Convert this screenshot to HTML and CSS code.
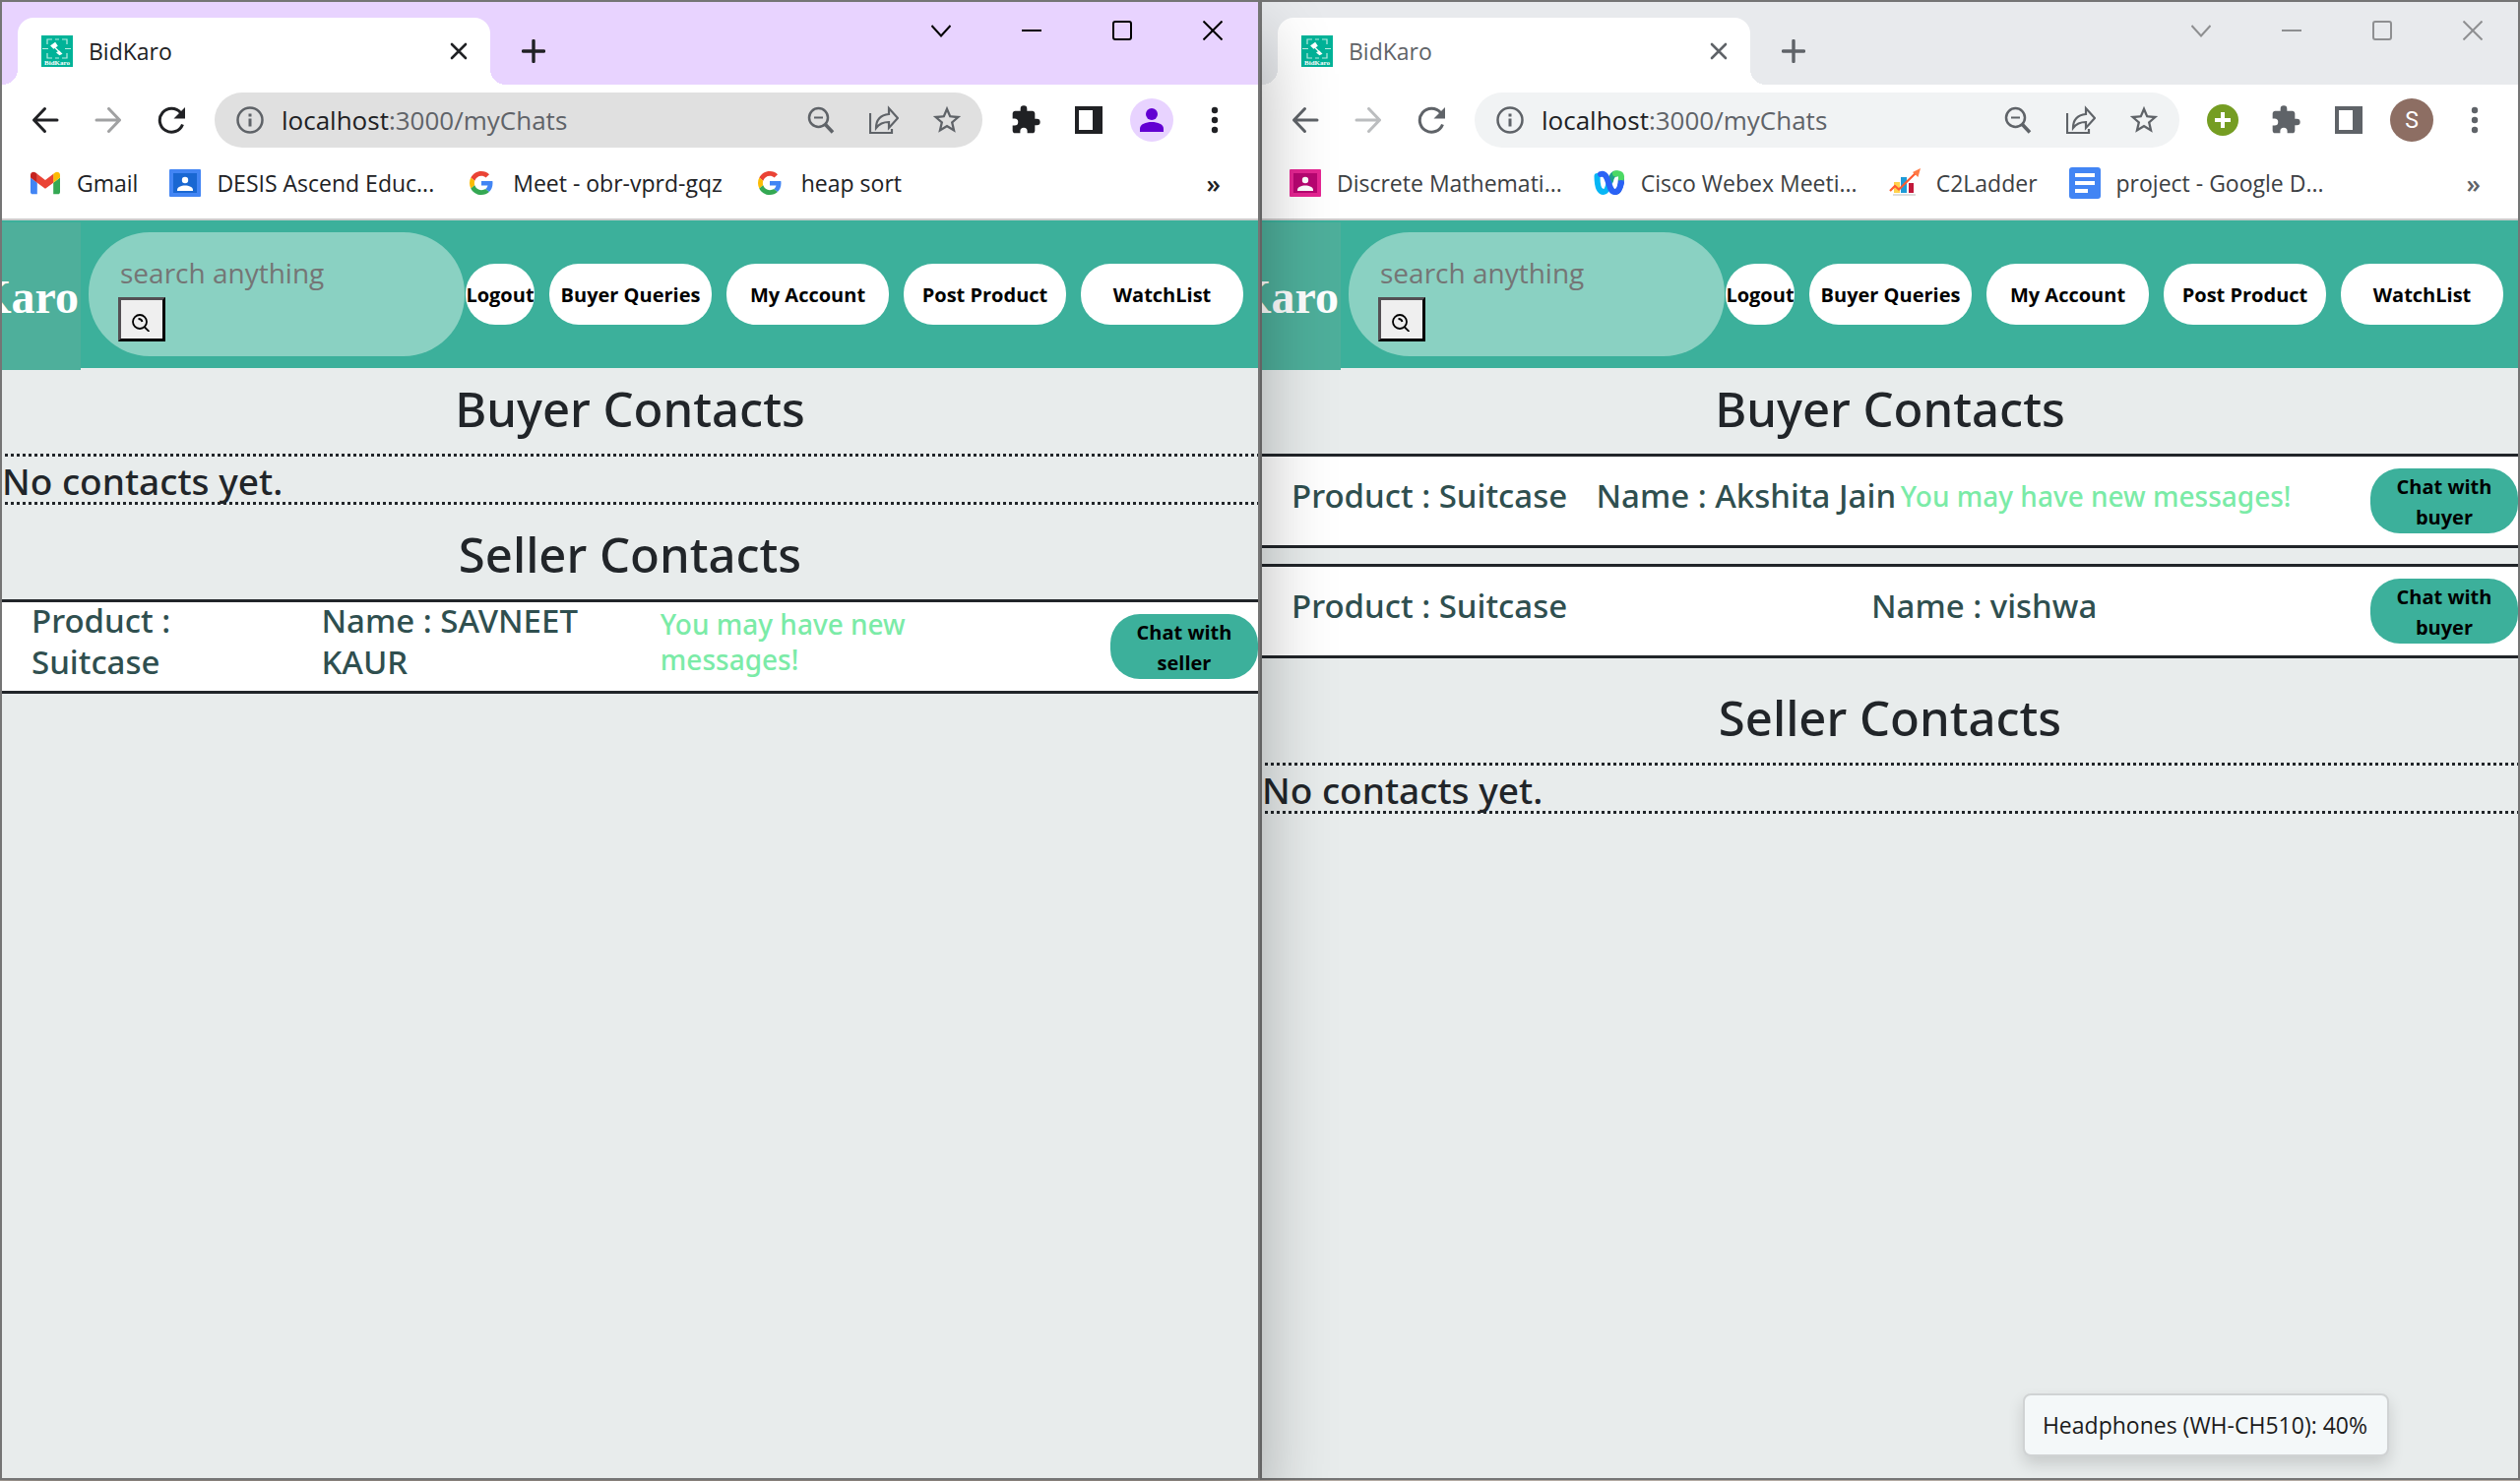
FILE: index.html
```html
<!DOCTYPE html>
<html lang="en">
<head>
<meta charset="utf-8">
<title>BidKaro</title>
<link rel="stylesheet" href="styles.css">
</head>
<body>
<svg class="defs" aria-hidden="true">
  <symbol id="favicon" viewBox="0 0 32 32">
    <rect width="32" height="32" fill="#00b398"/>
    <path d="M6 9V4h5M21 4h5v5M6 18v5h5M21 23h5v-5M1 13.500h6M24 13.500h6M14 4h4M14 23h4" fill="none" stroke="#b9ece2" stroke-width="1.200"/>
    <path d="M10 10.500l4-3 2 3-3.500 2.500zM13.500 12l5 5M16 17.500l2-1.500 2.500 2.500-2 1z" fill="#fff" stroke="#fff" stroke-width="1.200"/>
    <text x="16" y="30" text-anchor="middle" font-family="Liberation Serif, serif" font-weight="700" font-size="7" fill="#fff">BidKaro</text>
  </symbol>
  <symbol id="close-tab" viewBox="0 0 20 20"><path d="M3 3l14 14M17 3L3 17" fill="none" stroke="currentColor" stroke-width="2.600" stroke-linecap="round"/></symbol>
  <symbol id="plus" viewBox="0 0 24 24"><path d="M12 1.500v21M1.500 12h21" fill="none" stroke="currentColor" stroke-width="3.400" stroke-linecap="round"/></symbol>
  <symbol id="plus-bold" viewBox="0 0 18 18"><path d="M9 1v16M1 9h16" fill="none" stroke="currentColor" stroke-width="4"/></symbol>
  <symbol id="chevron" viewBox="0 0 20 20"><path d="M0.500 5L10 15.500 19.500 5" fill="none" stroke="currentColor" stroke-width="2"/></symbol>
  <symbol id="minimize" viewBox="0 0 20 20"><path d="M0 10h20" stroke="currentColor" stroke-width="2"/></symbol>
  <symbol id="maximize" viewBox="0 0 20 20"><rect x="1" y="1" width="18" height="18" rx="2" fill="none" stroke="currentColor" stroke-width="2"/></symbol>
  <symbol id="close" viewBox="0 0 20 20"><path d="M0.500 0.500l19 19M19.500 0.500l-19 19" stroke="currentColor" stroke-width="2"/></symbol>
  <symbol id="back" viewBox="0 0 28 28"><path d="M26 14H2.500M13.500 2.500L2.500 14l11 11.500" fill="none" stroke="currentColor" stroke-width="3" stroke-linecap="round" stroke-linejoin="round"/></symbol>
  <symbol id="forward" viewBox="0 0 28 28"><path d="M2 14h23.500M14.500 2.500l11 11.500-11 11.500" fill="none" stroke="currentColor" stroke-width="3" stroke-linecap="round" stroke-linejoin="round"/></symbol>
  <symbol id="reload" viewBox="0 0 28 28"><path d="M25.500 18.500A12 12 0 1 1 23.500 6.500" fill="none" stroke="currentColor" stroke-width="3"/><path d="M28 1v11.500H16.500z" fill="currentColor"/></symbol>
  <symbol id="info" viewBox="0 0 28 28"><circle cx="14" cy="14" r="12.500" fill="none" stroke="currentColor" stroke-width="2.500"/><path d="M14 12.500v8M14 7.500v3" stroke="currentColor" stroke-width="3"/></symbol>
  <symbol id="zoom-out" viewBox="0 0 28 28"><circle cx="11.500" cy="11.500" r="9.500" fill="none" stroke="currentColor" stroke-width="2.500"/><path d="M7 11.500h9" stroke="currentColor" stroke-width="2"/><path d="M18.500 18.500l7.500 8" stroke="currentColor" stroke-width="3.500"/></symbol>
  <symbol id="share" viewBox="0 0 30 30"><path d="M1 8v20h22v-4" fill="none" stroke="currentColor" stroke-width="2.200"/><path d="M20 3v6C11 10 7 15 7 23c3-4 7-6 13-6v6l9-10z" fill="none" stroke="currentColor" stroke-width="2.200" stroke-linejoin="miter"/></symbol>
  <symbol id="star" viewBox="0 0 24 24"><path fill="currentColor" d="M22 9.240l-7.190-.62L12 2 9.190 8.630 2 9.240l5.460 4.730L5.820 21 12 17.270 18.180 21l-1.630-7.030L22 9.240zM12 15.400l-3.760 2.270 1-4.280-3.320-2.880 4.380-.38L12 6.100l1.710 4.040 4.380.38-3.320 2.880 1 4.280L12 15.400z"/></symbol>
  <symbol id="puzzle" viewBox="0 0 24 24"><path fill="currentColor" d="M20.500 11H19V7c0-1.100-.9-2-2-2h-4V3.500a2.500 2.500 0 0 0-5 0V5H4c-1.100 0-2 .9-2 2v3.800h1.500a2.700 2.700 0 0 1 0 5.400H2V20c0 1.100.9 2 2 2h3.800v-1.500a2.700 2.700 0 0 1 5.400 0V22H17c1.100 0 2-.9 2-2v-4h1.500a2.500 2.500 0 0 0 0-5z"/></symbol>
  <symbol id="panel" viewBox="0 0 28 28"><path fill="currentColor" fill-rule="evenodd" d="M0 0h28v28H0zM4 4v20h14V4z"/></symbol>
  <symbol id="dots" viewBox="0 0 8 28"><circle cx="4" cy="4" r="3.200" fill="currentColor"/><circle cx="4" cy="14" r="3.200" fill="currentColor"/><circle cx="4" cy="24" r="3.200" fill="currentColor"/></symbol>
  <symbol id="person" viewBox="0 0 24 24"><ellipse cx="12" cy="6" rx="6" ry="6" fill="currentColor"/><path d="M0 24v-3c0-5 6-7 12-7s12 2 12 7v3z" fill="currentColor"/></symbol>
  <symbol id="gmail" viewBox="52 42 88 66">
    <path fill="#4285f4" d="M58 108h14V74L52 59v43c0 3.320 2.690 6 6 6"/>
    <path fill="#34a853" d="M120 108h14c3.320 0 6-2.690 6-6V59l-20 15"/>
    <path fill="#fbbc04" d="M120 48v26l20-15v-8c0-7.420-8.470-11.650-14.400-7.200"/>
    <path fill="#ea4335" d="M72 74V48l24 18 24-18v26L96 92"/>
    <path fill="#c5221f" d="M52 51v8l20 15V48l-5.600-4.200c-5.940-4.450-14.400-.22-14.400 7.200"/>
  </symbol>
  <symbol id="google" viewBox="0 0 48 48">
    <path fill="#ea4335" d="M24 9.500c3.540 0 6.710 1.220 9.210 3.600l6.850-6.850C35.900 2.380 30.470 0 24 0 14.620 0 6.510 5.380 2.560 13.220l7.980 6.190C12.430 13.720 17.740 9.500 24 9.500z"/>
    <path fill="#4285f4" d="M46.980 24.550c0-1.570-.15-3.090-.38-4.550H24v9.020h12.940c-.58 2.960-2.260 5.480-4.780 7.180l7.730 6c4.510-4.180 7.090-10.360 7.090-17.650z"/>
    <path fill="#fbbc05" d="M10.530 28.590A14.500 14.500 0 0 1 9.770 24c0-1.600.27-3.140.76-4.590l-7.980-6.190A23.900 23.900 0 0 0 0 24c0 3.880.92 7.540 2.560 10.780l7.970-6.190z"/>
    <path fill="#34a853" d="M24 48c6.480 0 11.930-2.130 15.890-5.810l-7.730-6c-2.150 1.450-4.920 2.300-8.160 2.300-6.260 0-11.570-4.220-13.470-9.910l-7.980 6.190C6.510 42.620 14.620 48 24 48z"/>
  </symbol>
  <symbol id="classroom-blue" viewBox="0 0 32 28"><rect width="32" height="28" rx="1" fill="#4285f4"/><rect x="4" y="4" width="24" height="20" fill="#1967d2"/><circle cx="16" cy="11" r="3.200" fill="#fff"/><path d="M8 22v-1c0-3 4-4.500 8-4.500s8 1.500 8 4.500v1z" fill="#fff"/></symbol>
  <symbol id="classroom-pink" viewBox="0 0 32 28"><rect width="32" height="28" rx="1" fill="#e52592"/><rect x="4" y="4" width="24" height="20" fill="#b80672"/><circle cx="16" cy="11" r="3.200" fill="#fff"/><path d="M8 22v-1c0-3 4-4.500 8-4.500s8 1.500 8 4.500v1z" fill="#fff"/></symbol>
  <symbol id="webex" viewBox="0 0 32 26" fill="none" stroke-width="6" stroke-linecap="round">
    <path d="M28 8c-.5 8-2 14-6 14" stroke="#1e56d8"/>
    <path d="M17 11c1-5 3-7.500 6-7.500" stroke="#1fa08a"/>
    <path d="M22 3.500c4.500-1.200 6.500 1 6 5" stroke="#4cd964"/>
    <path d="M3.500 6c0 9 1.500 16 6.500 16 3 0 4.500-4 5.500-9" stroke="#07b6f5"/>
    <path d="M7 4c9-3 7 18 14.500 18 4 0 5.500-4 6.500-9" stroke="#2a62f5"/>
  </symbol>
  <symbol id="ladder" viewBox="0 0 32 32"><rect x="5" y="15" width="6" height="11" fill="#ffd24d"/><rect x="12" y="10" width="6" height="16" fill="#1e9bd7"/><rect x="20" y="16" width="5" height="10" fill="#c2183a"/><path d="M4 28h23" stroke="#ddd" stroke-width="2"/><path d="M1 24l5-5 4 3.500L28 5" fill="none" stroke="#ff5a30" stroke-width="2.200"/><path d="M32 1l-8 4 5.500 5z" fill="#ff7a45"/></symbol>
  <symbol id="docs" viewBox="0 0 32 32"><rect width="32" height="32" rx="3" fill="#4285f4"/><path d="M6 8h20M6 16h20M6 24h13" stroke="#fff" stroke-width="4"/></symbol>
  <symbol id="search" viewBox="0 0 18 18"><circle cx="8" cy="8" r="7" fill="none" stroke="currentColor" stroke-width="1.800"/><path d="M6.500 5c2.500 0 3.500.7 4 3M12.500 13l5 5" fill="none" stroke="currentColor" stroke-width="1.800"/></symbol>
</svg>

<div class="desktop">
  <section class="window window--active">
    <div class="tabs">
      <div class="tab">
        <svg class="i32"><use href="#favicon"/></svg>
        <span class="tab-title">BidKaro</span>
        <button class="icon-btn tab-close" aria-label="Close tab"><svg class="i20"><use href="#close-tab"/></svg></button>
      </div>
      <button class="icon-btn new-tab" aria-label="New tab"><svg class="i24"><use href="#plus"/></svg></button>
      <div class="controls">
        <button class="icon-btn" aria-label="Search tabs"><svg class="i20"><use href="#chevron"/></svg></button>
        <button class="icon-btn" aria-label="Minimize"><svg class="i20"><use href="#minimize"/></svg></button>
        <button class="icon-btn" aria-label="Maximize"><svg class="i20"><use href="#maximize"/></svg></button>
        <button class="icon-btn" aria-label="Close"><svg class="i20"><use href="#close"/></svg></button>
      </div>
    </div>
    <div class="toolbar">
      <div class="tools">
        <button class="icon-btn" aria-label="Back"><svg class="i28"><use href="#back"/></svg></button>
        <button class="icon-btn is-off" aria-label="Forward"><svg class="i28"><use href="#forward"/></svg></button>
        <button class="icon-btn" aria-label="Reload"><svg class="i28"><use href="#reload"/></svg></button>
      </div>
      <div class="omnibox">
        <svg class="i28"><use href="#info"/></svg>
        <a class="url" href="#"><span class="host">localhost</span>:3000/myChats</a>
        <div class="tools">
          <button class="icon-btn" aria-label="Zoom"><svg class="i28"><use href="#zoom-out"/></svg></button>
          <button class="icon-btn" aria-label="Share"><svg class="i30"><use href="#share"/></svg></button>
          <button class="icon-btn" aria-label="Bookmark"><svg class="i34"><use href="#star"/></svg></button>
        </div>
      </div>
      <div class="tools">
        <button class="icon-btn" aria-label="Extensions"><svg class="i32"><use href="#puzzle"/></svg></button>
        <button class="icon-btn" aria-label="Side panel"><svg class="i28"><use href="#panel"/></svg></button>
        <button class="icon-btn" aria-label="Profile"><span class="avatar"><svg class="i24"><use href="#person"/></svg></span></button>
        <button class="icon-btn" aria-label="Menu"><svg class="dots"><use href="#dots"/></svg></button>
      </div>
    </div>
    <div class="bookmarks">
      <a href="#"><svg class="i32 pad-1"><use href="#gmail"/></svg>Gmail</a>
      <a href="#"><svg class="i32"><use href="#classroom-blue"/></svg>DESIS Ascend Educ...</a>
      <a href="#"><svg class="i32 pad-4"><use href="#google"/></svg>Meet - obr-vprd-gqz</a>
      <a href="#"><svg class="i32 pad-4"><use href="#google"/></svg>heap sort</a>
      <button class="more" aria-label="More bookmarks">»</button>
    </div>
    <div class="page">
      <nav class="navbar">
        <a class="brand" href="#"><span>BidKaro</span></a>
        <form class="search">
          <input type="text" placeholder="search anything" aria-label="search anything">
          <button type="button" aria-label="Search"><svg class="i18"><use href="#search"/></svg></button>
        </form>
        <div class="nav-buttons">
          <button class="pill pill--small">Logout</button>
          <button class="pill">Buyer Queries</button>
          <button class="pill">My Account</button>
          <button class="pill">Post Product</button>
          <button class="pill">WatchList</button>
        </div>
      </nav>
      <h1>Buyer Contacts</h1>
      <p class="empty">No contacts yet.</p>
      <h1>Seller Contacts</h1>
      <div class="contacts">
        <div class="contact contact--narrow">
          <h4><span>Product : Suitcase</span></h4>
          <h4><span>Name : SAVNEET KAUR</span></h4>
          <h5><span>You may have new messages!</span></h5>
          <button class="chat">Chat with seller</button>
        </div>
      </div>
    </div>
  </section>

  <section class="window window--idle">
    <div class="tabs">
      <div class="tab">
        <svg class="i32"><use href="#favicon"/></svg>
        <span class="tab-title">BidKaro</span>
        <button class="icon-btn tab-close" aria-label="Close tab"><svg class="i20"><use href="#close-tab"/></svg></button>
      </div>
      <button class="icon-btn new-tab" aria-label="New tab"><svg class="i24"><use href="#plus"/></svg></button>
      <div class="controls">
        <button class="icon-btn" aria-label="Search tabs"><svg class="i20"><use href="#chevron"/></svg></button>
        <button class="icon-btn" aria-label="Minimize"><svg class="i20"><use href="#minimize"/></svg></button>
        <button class="icon-btn" aria-label="Maximize"><svg class="i20"><use href="#maximize"/></svg></button>
        <button class="icon-btn" aria-label="Close"><svg class="i20"><use href="#close"/></svg></button>
      </div>
    </div>
    <div class="toolbar">
      <div class="tools">
        <button class="icon-btn" aria-label="Back"><svg class="i28"><use href="#back"/></svg></button>
        <button class="icon-btn is-off" aria-label="Forward"><svg class="i28"><use href="#forward"/></svg></button>
        <button class="icon-btn" aria-label="Reload"><svg class="i28"><use href="#reload"/></svg></button>
      </div>
      <div class="omnibox">
        <svg class="i28"><use href="#info"/></svg>
        <a class="url" href="#"><span class="host">localhost</span>:3000/myChats</a>
        <div class="tools">
          <button class="icon-btn" aria-label="Zoom"><svg class="i28"><use href="#zoom-out"/></svg></button>
          <button class="icon-btn" aria-label="Share"><svg class="i30"><use href="#share"/></svg></button>
          <button class="icon-btn" aria-label="Bookmark"><svg class="i34"><use href="#star"/></svg></button>
        </div>
      </div>
      <div class="tools">
        <button class="icon-btn" aria-label="Add-on"><span class="addon"><svg class="i18"><use href="#plus-bold"/></svg></span></button>
        <button class="icon-btn" aria-label="Extensions"><svg class="i32"><use href="#puzzle"/></svg></button>
        <button class="icon-btn" aria-label="Side panel"><svg class="i28"><use href="#panel"/></svg></button>
        <button class="icon-btn" aria-label="Profile"><span class="avatar avatar--letter">S</span></button>
        <button class="icon-btn" aria-label="Menu"><svg class="dots"><use href="#dots"/></svg></button>
      </div>
    </div>
    <div class="bookmarks">
      <a href="#"><svg class="i32"><use href="#classroom-pink"/></svg>Discrete Mathemati...</a>
      <a href="#"><svg class="i32"><use href="#webex"/></svg>Cisco Webex Meeti...</a>
      <a href="#"><svg class="i32"><use href="#ladder"/></svg>C2Ladder</a>
      <a href="#"><svg class="i32"><use href="#docs"/></svg>project - Google D...</a>
      <button class="more" aria-label="More bookmarks">»</button>
    </div>
    <div class="page">
      <nav class="navbar">
        <a class="brand" href="#"><span>BidKaro</span></a>
        <form class="search">
          <input type="text" placeholder="search anything" aria-label="search anything">
          <button type="button" aria-label="Search"><svg class="i18"><use href="#search"/></svg></button>
        </form>
        <div class="nav-buttons">
          <button class="pill pill--small">Logout</button>
          <button class="pill">Buyer Queries</button>
          <button class="pill">My Account</button>
          <button class="pill">Post Product</button>
          <button class="pill">WatchList</button>
        </div>
      </nav>
      <h1>Buyer Contacts</h1>
      <div class="contacts">
        <div class="contact contact--wide">
          <h4><span>Product : Suitcase</span></h4>
          <h4><span>Name : Akshita Jain</span></h4>
          <h5><span>You may have new messages!</span></h5>
          <button class="chat">Chat with buyer</button>
        </div>
        <div class="contact contact--quiet">
          <h4><span>Product : Suitcase</span></h4>
          <h4><span>Name : vishwa</span></h4>
          <button class="chat">Chat with buyer</button>
        </div>
      </div>
      <h1>Seller Contacts</h1>
      <p class="empty">No contacts yet.</p>
    </div>
  </section>
  <div class="toast" role="status">Headphones (WH-CH510): 40%</div>
</div>
</body>
</html>
```
FILE: styles.css
```css
* { box-sizing: border-box; }

body {
  margin: 0;
  background: #b5aca4;
  color: #212529;
  font-family: "Open Sans", "Noto Sans", sans-serif;
  font-size: 23px;
}

button, input { font: inherit; color: inherit; }
a { color: inherit; text-decoration: none; }
svg { display: block; flex: none; }
.defs { position: absolute; width: 0; height: 0; }

.i18 { width: 18px; height: 18px; }
.i20 { width: 20px; height: 20px; }
.i24 { width: 24px; height: 24px; }
.i28 { width: 28px; height: 28px; }
.i30 { width: 30px; height: 30px; }
.i32 { width: 32px; height: 32px; }
.i34 { width: 34px; height: 34px; }
.pad-1 { padding: 1px; }
.pad-4 { padding: 4px; }

.desktop {
  position: relative;
  display: grid;
  grid-template-columns: 1fr 1fr;
  min-height: 100vh;
  padding-bottom: 1px;
  overflow: hidden;
}

.window {
  display: flex;
  flex-direction: column;
  min-width: 0;
  border: 2px solid #757575;
  background: #fff;
}
.window--active {
  --strip: #e8d3ff;
  --field: #e0e0e0;
  --icon: #202124;
  --label: #202124;
  --control: #000;
  position: relative;
  z-index: 1;
  box-shadow: 0 40px 70px rgba(0, 0, 0, .3);
}
.window--idle {
  --strip: #e8eaed;
  --field: #f1f3f4;
  --icon: #5f6368;
  --label: #3c4043;
  --control: #8e8f91;
}

/* Tab strip */
.tabs {
  display: flex;
  height: 84px;
  background: var(--strip);
  color: var(--icon);
}
.tab {
  position: relative;
  display: flex;
  align-items: center;
  width: 480px;
  margin: 16px 0 0 16px;
  padding: 0 22px 0 24px;
  border-radius: 16px 16px 0 0;
  background: #fff;
}
.tab::before, .tab::after {
  content: "";
  position: absolute;
  bottom: 0;
  width: 16px;
  height: 16px;
}
.tab::before { left: -16px; background: radial-gradient(circle at 0 0, transparent 16px, #fff 16px); }
.tab::after { right: -16px; background: radial-gradient(circle at 100% 0, transparent 16px, #fff 16px); }
.tab-title { flex: 1; padding-left: 16px; }

.icon-btn {
  display: flex;
  align-items: center;
  justify-content: center;
  padding: 0;
  border: 0;
  background: none;
}
.new-tab { width: 56px; height: 68px; margin: 16px 0 0 16px; }
.controls { display: flex; margin-left: auto; color: var(--control); }
.controls .icon-btn { width: 92px; height: 58px; }

/* Toolbar */
.toolbar {
  display: flex;
  align-items: center;
  gap: 12px;
  height: 72px;
  padding: 0 12px;
  color: var(--icon);
}
.tools { display: flex; }
.tools .icon-btn { width: 64px; height: 56px; }
.is-off { opacity: .42; }
.omnibox {
  display: flex;
  flex: 1;
  align-items: center;
  height: 56px;
  padding: 0 4px 0 22px;
  border-radius: 28px;
  background: var(--field);
  color: #5f6368;
}
.url { flex: 1; padding-left: 18px; font-size: 26px; white-space: nowrap; }
.host { color: #202124; }
.avatar, .addon {
  display: flex;
  align-items: center;
  justify-content: center;
  width: 44px;
  height: 44px;
  border-radius: 50%;
  background: #e8d3ff;
  color: #6200d2;
}
.avatar--letter { background: #8d6e63; color: #fff; font-family: Roboto, sans-serif; }
.addon { width: 32px; height: 32px; background: #759d22; color: #fff; }
.dots { width: 8px; height: 28px; }

/* Bookmarks */
.bookmarks {
  display: flex;
  align-items: center;
  gap: 32px;
  height: 66px;
  padding: 0 38px 8px 28px;
  border-bottom: 2px solid #ccc;
  color: var(--label);
  white-space: nowrap;
}
.bookmarks a { display: flex; align-items: center; gap: 16px; }
.more { margin-left: auto; padding: 0; border: 0; background: none; color: var(--icon); font-size: 26px; font-weight: 600; line-height: 32px; }

/* Page */
.page { flex: 1; background: #e8ecec; }
.navbar {
  display: flex;
  align-items: center;
  height: 150px;
  padding-right: 15px;
  background: #3cb09b;
}
.brand {
  display: flex;
  flex: none;
  align-items: center;
  justify-content: flex-end;
  align-self: flex-start;
  width: 80px;
  height: 150px;
  margin: 2px 8px 0 0;
  padding-right: 2px;
  overflow: hidden;
  background: #4eaf9b;
  color: #fff;
  font-family: "Liberation Serif", serif;
  font-size: 48px;
  font-weight: 700;
}
.search {
  display: flex;
  flex: 1;
  flex-direction: column;
  align-items: flex-start;
  gap: 2px;
  min-width: 0;
  height: 126px;
  margin-right: 1px;
  padding: 18px 30px 0;
  border-radius: 62px;
  background: #8ad1c2;
}
.search input {
  width: 100%;
  height: 46px;
  padding: 0 2px;
  border: 0;
  outline: 0;
  background: none;
  font-size: 28px;
}
.search input::placeholder { color: #757575; }
.search button {
  display: flex;
  align-items: center;
  justify-content: center;
  width: 48px;
  height: 45px;
  padding: 6px 2px 0 0;
  border: 3px solid #000;
  border-color: #545054 #000 #000 #545054;
  background: #efefef;
  color: #000;
}
.nav-buttons { display: flex; gap: 15px; }
.pill {
  width: 165px;
  height: 62px;
  padding: 0;
  border: 0;
  border-radius: 30px;
  background: #fff;
  color: #000;
  font-size: 20px;
  font-weight: 700;
  white-space: nowrap;
}
.pill--small { width: 70px; }

h1, h4, h5, p { margin: 0; font-family: "Noto Sans", "Open Sans", sans-serif; font-weight: 500; }
h1 {
  padding-top: 11px;
  margin-bottom: 16px;
  font-size: 49px;
  line-height: 60px;
  text-align: center;
}
.empty {
  margin-bottom: 9px;
  padding: 5px 0 1px;
  background:
    repeating-linear-gradient(90deg, transparent 0 3px, #212529 3px 6px) top / 100% 3px no-repeat,
    repeating-linear-gradient(90deg, transparent 0 3px, #212529 3px 6px) bottom / 100% 3px no-repeat;
  font-size: 37px;
  line-height: 46px;
}
.contacts { display: grid; gap: 16px; margin-bottom: 19px; }
.contact {
  display: grid;
  grid-template-rows: 90px;
  align-items: center;
  height: 96px;
  padding-left: 30px;
  border: solid #212529;
  border-width: 3px 0;
  background: #fff;
}
.contact--narrow { grid-template-columns: 295fr 345fr 458fr 150px; }
.contact--wide { grid-template-columns: 310fr 310fr 478fr 150px; white-space: nowrap; }
.contact--quiet { grid-template-columns: 590fr 508fr 150px; }
.contact h4 { padding-bottom: 10px; color: #2f4f4f; font-size: 33px; line-height: 42px; }
.contact h5 { padding-bottom: 10px; color: #7beba7; font-size: 28px; line-height: 36px; }
.contact--narrow h4 span, .contact--narrow h5 span { display: block; max-width: 274px; }
.contact--narrow h4:first-child span { max-width: 200px; }
.chat {
  height: 66px;
  padding: 2px 22px 0;
  border: 0;
  border-radius: 30px;
  background: #3cb09b;
  color: #000;
  font-size: 20px;
  font-weight: 700;
  line-height: 31px;
  white-space: normal;
}

.toast {
  position: absolute;
  z-index: 2;
  right: 133px;
  bottom: 25px;
  padding: 0 20px 0 18px;
  border: 2px solid #d0d3d4;
  border-radius: 8px;
  background: #f4f8f9;
  box-shadow: 0 8px 16px rgba(0, 0, 0, .14);
  color: #1b1b1b;
  line-height: 60px;
}
```
